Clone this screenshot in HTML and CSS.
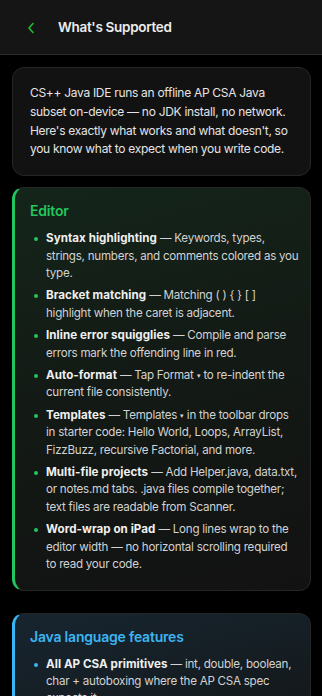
FILE: index.html
```html
<!DOCTYPE html>
<html>
<head>
<meta charset="utf-8">
<link rel="stylesheet" href="styles.css">
</head>
<body>
<header class="nav">
  <svg class="back" width="8" height="12" viewBox="0 0 8 12"><path d="M6 1.5 L2 6 L6 10.5" fill="none" stroke="#1fc12a" stroke-width="1.6" stroke-linecap="round" stroke-linejoin="round"/></svg>
  <h1 class="nav-title">What's Supported</h1>
</header>
<main class="content">
  <section class="card intro">
    <p>CS++ Java IDE runs an offline AP CSA Java subset on-device — no JDK install, no network. Here's exactly what works and what doesn't, so you know what to expect when you write code.</p>
  </section>
  <section class="card section editor">
    <h2 class="section-title">Editor</h2>
    <ul class="items">
      <li><b>Syntax highlighting</b> — Keywords, types, strings, numbers, and comments colored as you type.</li>
      <li><b>Bracket matching</b> — Matching ( ) { } [ ] highlight when the caret is adjacent.</li>
      <li><b>Inline error squigglies</b> — Compile and parse errors mark the offending line in red.</li>
      <li><b>Auto-format</b> — Tap Format <span class="caret">▾</span> to re-indent the current file consistently.</li>
      <li><b>Templates</b> — Templates <span class="caret">▾</span> in the toolbar drops in&nbsp;starter code: Hello World, Loops, ArrayList, FizzBuzz, recursive Factorial, and more.</li>
      <li><b>Multi-file projects</b> — Add Helper.java, data.txt, or notes.md tabs. .java files compile together; text files are readable from Scanner.</li>
      <li><b>Word-wrap on iPad</b> — Long lines wrap to the editor width — no horizontal scrolling required to&nbsp;read your code.</li>
    </ul>
  </section>
  <section class="card section java">
    <h2 class="section-title">Java language features</h2>
    <ul class="items">
      <li><b>All AP CSA primitives</b> — int, double, boolean, char + autoboxing where the AP CSA spec expects it.</li>
      <li><b>Classes and objects</b> — Constructors, fields, methods, static members, and inheritance.</li>
    </ul>
  </section>
</main>
</body>
</html>
```

FILE: styles.css
```css
* { box-sizing: border-box; }
html, body { margin: 0; padding: 0; }
body {
  background: #000;
  color: #e6e6e6;
  font-family: Inter, "Noto Sans", sans-serif;
  width: 322px;
  height: 696px;
  overflow: hidden;
}
.nav {
  height: 55px;
  background: #151515;
  border-bottom: 1px solid #2c2c2c;
  display: flex;
  align-items: center;
  padding-left: 27px;
}
.back { margin-top: 2px; }
.nav-title {
  margin: 0 0 0 23px;
  font-size: 13.5px;
  font-weight: 600;
  color: #ececec;
  letter-spacing: -0.3px;
}
.content {
  padding: 12px 11px 0 12px;
  display: flex;
  flex-direction: column;
}
.card {
  border: 1px solid #262626;
  border-radius: 12px;
  background: #121212;
}
.intro {
  padding: 16px 15px 16px 17px;
}
.intro p {
  margin: 0;
  font-size: 12px;
  line-height: 18.8px;
  letter-spacing: -0.3px;
  color: #e4e4e4;
}
.section {
  margin-top: 11px;
  padding: 13px 10px 16px 15px;
  border-left-width: 3px;
}
.section + .section { margin-top: 22px; }
.editor {
  border-left-color: #22c55e;
  background: linear-gradient(165deg, #14251a 0%, #131a15 45%, #121212 100%);
}
.java {
  border-left-color: #38b6f4;
  background: linear-gradient(165deg, #172530 0%, #151d22 50%, #121212 100%);
}
.section-title {
  margin: 0;
  font-size: 14px;
  line-height: 20px;
  font-weight: 600;
  letter-spacing: -0.2px;
}
.editor .section-title { color: #22c55e; }
.java .section-title { color: #3bb4f2; }
.items {
  list-style: none;
  margin: 9px 0 0 0;
  padding: 0;
  display: flex;
  flex-direction: column;
  gap: 5px;
}
.items li {
  position: relative;
  padding-left: 16px;
  font-size: 11.6px;
  line-height: 17.4px;
  letter-spacing: -0.25px;
  color: #d2d2d2;
}
.items li::before {
  content: "";
  position: absolute;
  left: 4px;
  top: 7px;
  width: 4px;
  height: 4px;
  border-radius: 50%;
}
.editor .items li::before { background: #22c55e; }
.java .items li::before { background: #38b6f4; }
.items b {
  font-weight: 700;
  letter-spacing: 0.05px;
  color: #f0f0f0;
}
.caret { font-size: 7px; line-height: 1; vertical-align: 1px; }
```
